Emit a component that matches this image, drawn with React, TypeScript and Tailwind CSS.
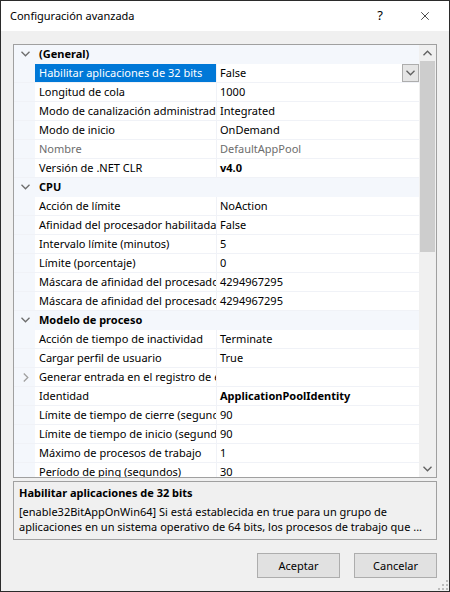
import { X } from "lucide-react";

type Row =
  | { kind: "cat"; label: string }
  | { kind: "prop"; label: string; value?: string; bold?: boolean; muted?: boolean; selected?: boolean; expand?: boolean };

const ROWS: Row[] = [
  { kind: "cat", label: "(General)" },
  { kind: "prop", label: "Habilitar aplicaciones de 32 bits", value: "False", selected: true },
  { kind: "prop", label: "Longitud de cola", value: "1000" },
  { kind: "prop", label: "Modo de canalización administrada", value: "Integrated" },
  { kind: "prop", label: "Modo de inicio", value: "OnDemand" },
  { kind: "prop", label: "Nombre", value: "DefaultAppPool", muted: true },
  { kind: "prop", label: "Versión de .NET CLR", value: "v4.0", bold: true },
  { kind: "cat", label: "CPU" },
  { kind: "prop", label: "Acción de límite", value: "NoAction" },
  { kind: "prop", label: "Afinidad del procesador habilitada", value: "False" },
  { kind: "prop", label: "Intervalo límite (minutos)", value: "5" },
  { kind: "prop", label: "Límite (porcentaje)", value: "0" },
  { kind: "prop", label: "Máscara de afinidad del procesador", value: "4294967295" },
  { kind: "prop", label: "Máscara de afinidad del procesador (64 bits)", value: "4294967295" },
  { kind: "cat", label: "Modelo de proceso" },
  { kind: "prop", label: "Acción de tiempo de inactividad", value: "Terminate" },
  { kind: "prop", label: "Cargar perfil de usuario", value: "True" },
  { kind: "prop", label: "Generar entrada en el registro de eventos de modelo de proceso", expand: true },
  { kind: "prop", label: "Identidad", value: "ApplicationPoolIdentity", bold: true },
  { kind: "prop", label: "Límite de tiempo de cierre (segundos)", value: "90" },
  { kind: "prop", label: "Límite de tiempo de inicio (segundos)", value: "90" },
  { kind: "prop", label: "Máximo de procesos de trabajo", value: "1" },
  { kind: "prop", label: "Período de ping (segundos)", value: "30" },
  { kind: "prop", label: "Período máximo de respuesta de ping (segundos)", value: "90" },
];

function ChevronDown({ className = "" }: { className?: string }) {
  return (
    <svg width="9" height="6" viewBox="0 0 9 6" className={className}>
      <path d="M0.5 0.8 L4.5 4.8 L8.5 0.8" fill="none" stroke="currentColor" strokeWidth="1.3" />
    </svg>
  );
}

function ChevronRight() {
  return (
    <svg width="6" height="9" viewBox="0 0 6 9">
      <path d="M0.8 0.5 L4.8 4.5 L0.8 8.5" fill="none" stroke="#a0a0a0" strokeWidth="1.3" />
    </svg>
  );
}

function GridRow({ row }: { row: Row }) {
  if (row.kind === "cat") {
    return (
      <div className="h-[19px] shrink-0 flex items-center bg-[#f4f7fc] border-b border-[#f4f7fc]">
        <div className="w-[21px] flex justify-center pl-[1px] text-[#6d6d6d]">
          <ChevronDown />
        </div>
        <span className="pl-[4px] pb-[1px] font-bold text-black">{row.label}</span>
      </div>
    );
  }
  return (
    <div className="h-[19px] shrink-0 flex bg-white border-b border-[#f0f2f7]">
      <div className="w-[21px] bg-[#f4f7fc] flex items-center justify-center pl-[2px]">
        {row.expand && <ChevronRight />}
      </div>
      <div
        className={`w-[182px] shrink-0 border-r border-[#f0f2f7] pl-[4px] pb-[1px] flex items-center overflow-hidden whitespace-nowrap ${
          row.selected ? "bg-[#0078d7] text-white" : row.muted ? "text-[#6d6d6d]" : "text-black"
        }`}
      >
        {row.label}
      </div>
      <div
        className={`flex-1 pl-[3px] flex items-center overflow-hidden whitespace-nowrap ${
          row.bold ? "font-bold" : ""
        } ${row.muted ? "text-[#6d6d6d]" : "text-black"}`}
      >
        <span className="flex-1 pb-[1px]">{row.value}</span>
        {row.selected && (
          <div className="w-[17px] h-[18px] bg-[#e5e5e5] border border-[#adadad] flex items-center justify-center text-[#606060]">
            <ChevronDown />
          </div>
        )}
      </div>
    </div>
  );
}

export default function App() {
  return (
    <div
      className="w-[450px] h-[592px] border border-[#2b2b2b] bg-[#f0f0f0] flex flex-col text-[11px] leading-none text-black"
      style={{ fontFamily: "'Noto Sans', 'Open Sans', sans-serif" }}
    >
      {/* Title bar */}
      <div className="h-[30px] shrink-0 bg-white flex items-center pl-[9px] pb-[1px]">
        <span className="flex-1 text-[11px]">Configuración avanzada</span>
        <span className="w-[46px] text-center text-[13px]">?</span>
        <div className="w-[46px] flex justify-center pr-[2px]">
          <X className="w-[14px] h-[14px]" strokeWidth={1.2} />
        </div>
      </div>

      <div className="flex-1 flex flex-col px-[12px] pt-[13px]">
        {/* Property grid */}
        <div className="h-[434px] shrink-0 border border-[#a0a0a0] flex bg-white">
          <div className="flex-1 flex flex-col overflow-hidden">
            {ROWS.map((r, i) => (
              <GridRow key={i} row={r} />
            ))}
          </div>
          {/* Scrollbar */}
          <div className="w-[17px] shrink-0 bg-[#f0f0f0] flex flex-col">
            <div className="h-[16px] flex items-center justify-center text-[#606060]">
              <ChevronDown className="rotate-180" />
            </div>
            <div className="h-[191px] mx-[1px] bg-[#cdcdcd]" />
            <div className="flex-1" />
            <div className="h-[17px] flex items-center justify-center text-[#606060]">
              <ChevronDown />
            </div>
          </div>
        </div>

        {/* Description */}
        <div className="mt-[3px] h-[59px] shrink-0 border border-[#a0a0a0] px-[5px] pt-[2px] flex flex-col">
          <div className="font-bold h-[17px] flex items-center">Habilitar aplicaciones de 32 bits</div>
          <div className="leading-[15px] mt-[3px]">
            [enable32BitAppOnWin64] Si está establecida en true para un grupo de aplicaciones en un sistema operativo de 64 bits, los procesos de trabajo que ...
          </div>
        </div>

        {/* Buttons */}
        <div className="mt-[13px] flex justify-end gap-[14px]">
          <button className="w-[83px] h-[25px] bg-[#e1e1e1] border border-[#adadad] text-[11px]">Aceptar</button>
          <button className="w-[83px] h-[25px] bg-[#e1e1e1] border border-[#adadad] text-[11px]">Cancelar</button>
        </div>

        <div className="flex-1 flex justify-end items-end -mr-[11px]">
          <svg width="10" height="10" viewBox="0 0 10 10" className="mb-[1px]">
            {[
              [8, 0],
              [4, 4],
              [8, 4],
              [0, 8],
              [4, 8],
              [8, 8],
            ].map(([x, y], i) => (
              <rect key={i} x={x} y={y} width="2" height="2" fill="#bcbcbc" />
            ))}
          </svg>
        </div>
      </div>
    </div>
  );
}
